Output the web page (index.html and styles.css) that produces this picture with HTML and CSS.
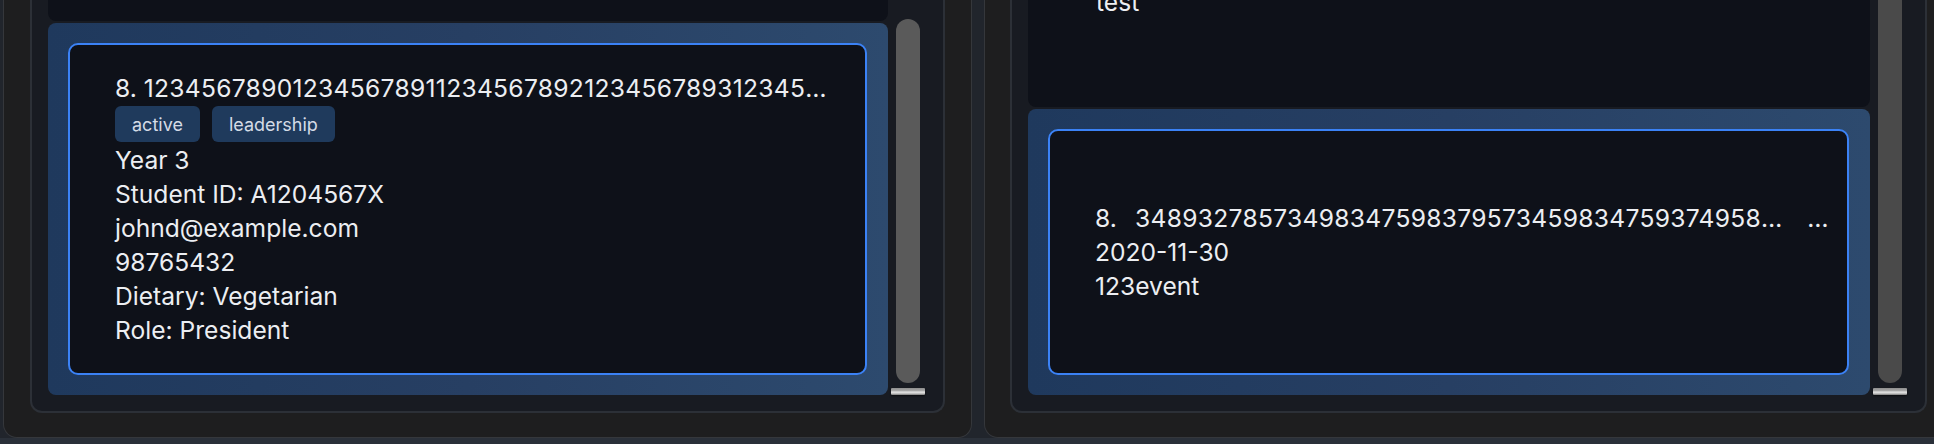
FILE: index.html
```html
<!DOCTYPE html>
<html lang="en">
<head>
<meta charset="utf-8">
<title>List panels</title>
<link rel="stylesheet" href="styles.css">
</head>
<body>
<div class="desk">
  <section class="window win-left">
    <div class="panel">
      <div class="list">
        <div class="card card-prev"></div>
        <div class="card card-selected card-person">
          <div class="card-inner">
            <div class="line">8. <span class="digits">123456789012345678911234567892123456789312345</span>…</div>
            <div class="tags">
              <span class="tag">active</span>
              <span class="tag">leadership</span>
            </div>
            <div class="line">Year 3</div>
            <div class="line">Student ID: A1204567X</div>
            <div class="line">johnd@example.com</div>
            <div class="line">98765432</div>
            <div class="line">Dietary: Vegetarian</div>
            <div class="line">Role: President</div>
          </div>
        </div>
      </div>
      <div class="scrollbar">
        <div class="thumb"></div>
        <div class="scroll-btn"></div>
      </div>
    </div>
  </section>
  <section class="window win-right">
    <div class="panel">
      <div class="list">
        <div class="card card-prev card-prev-event">
          <div class="line">test</div>
        </div>
        <div class="card card-selected card-event">
          <div class="card-inner">
            <div class="line name-row">
              <span class="idx">8.</span>
              <span class="name"><span class="digits">34893278573498347598379573459834759374958</span>…</span>
              <span class="more">…</span>
            </div>
            <div class="line">2020-11-30</div>
            <div class="line">123event</div>
          </div>
        </div>
      </div>
      <div class="scrollbar scrollbar-cut">
        <div class="thumb thumb-dim"></div>
        <div class="scroll-btn"></div>
      </div>
    </div>
  </section>
</div>
<div class="bottom-strip"></div>
</body>
</html>
```

FILE: styles.css
```css
* {
  box-sizing: border-box;
}

html, body {
  margin: 0;
  padding: 0;
}

body {
  width: 1934px;
  height: 444px;
  overflow: hidden;
  background: #21252c;
  font-family: "Inter", "Noto Sans", sans-serif;
  color: #eceef2;
}

.desk {
  display: flex;
  gap: 12px;
  height: 438px;
  padding-left: 3px;
}

.window {
  flex: none;
  display: flex;
  height: 438px;
  background: #1e1e1f;
  border: 1px solid #35373b;
  border-top: none;
  border-radius: 0 0 14px 14px;
  padding: 0 26px 24px 26px;
}

.win-left {
  width: 969px;
}

.win-right {
  width: 970px;
  padding-left: 25px;
}

.panel {
  flex: 1;
  min-width: 0;
  display: flex;
  background: #181b22;
  border: 2px solid #2c3037;
  border-top: none;
  border-radius: 0 0 12px 12px;
  padding: 0 18px 16px 16px;
}

.list {
  flex: 1;
  min-width: 0;
  display: flex;
  flex-direction: column;
  justify-content: flex-end;
  gap: 2px;
}

.card {
  flex: none;
  border-radius: 8px;
}

.card-prev {
  flex: 1;
  background: #0e1119;
  border-radius: 0 0 8px 8px;
}

.card-prev-event {
  display: flex;
  flex-direction: column;
  justify-content: flex-end;
  padding: 0 0 88px 68px;
}

.card-selected {
  padding: 20px 21px 20px 20px;
  background: linear-gradient(90deg, #1f395d 0%, #273f63 50%, #2d4a6e 100%);
}

.card-person {
  height: 372px;
}

.card-event {
  height: 286px;
}

.card-inner {
  height: 100%;
  min-width: 0;
  overflow: hidden;
  display: flex;
  flex-direction: column;
  justify-content: center;
  background: #0e1119;
  border: 2px solid #3b82f6;
  border-radius: 10px;
  padding: 0 45px;
}

.line {
  font-size: 24.6px;
  line-height: 34px;
  white-space: nowrap;
  color: #eceef2;
}

.digits {
  letter-spacing: 0.3px;
}

.name-row {
  display: flex;
  min-width: 0;
}

.idx {
  width: 40px;
  flex: none;
}

.name {
  flex: none;
}

.more {
  flex: none;
  margin-left: 25px;
}

.tags {
  display: flex;
  gap: 12px;
  padding: 1px 0;
}

.tag {
  height: 36px;
  display: flex;
  align-items: center;
  padding: 0 17px;
  background: #1f3a5c;
  border-radius: 6px;
  font-size: 18px;
  color: #d4dbe6;
}

.scrollbar {
  flex: none;
  width: 34px;
  margin-left: 3px;
  display: flex;
  flex-direction: column;
  align-items: center;
  padding-top: 19px;
}

.scrollbar-cut {
  padding-top: 0;
}

.thumb {
  flex: 1;
  width: 24px;
  background: #5a5a5a;
  border-radius: 12px;
}

.scrollbar-cut .thumb {
  border-radius: 0 0 12px 12px;
}

.thumb-dim {
  background: #4a4a4a;
}

.scroll-btn {
  flex: none;
  width: 34px;
  height: 7px;
  margin-top: 5px;
  border-radius: 1px;
  background: linear-gradient(#8e8e8e 0%, #a8a8a8 40%, #dcdcdc 55%, #dcdcdc 70%, #7a7a7a 100%);
  box-shadow: 0 1px 2px rgba(0, 0, 0, 0.6);
}

.bottom-strip {
  height: 6px;
  background: #2a3039;
}
```
